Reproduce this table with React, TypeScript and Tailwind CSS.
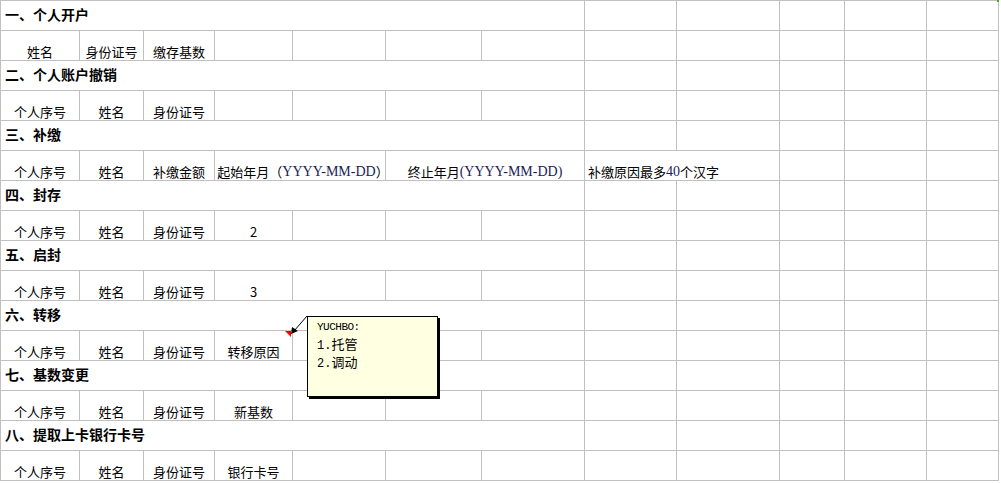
const cols = "grid-cols-[79px_64px_71px_78px_93px_96px_103px_92px_103px_65px_82px_72px]";

const cjk = "font-['SimSun','Noto_Sans_CJK_SC',sans-serif]";
const latin = "font-['Liberation_Serif','Noto_Sans_CJK_SC',serif] text-[#1c1c55]";

type Section = { title: string; fields: string[] };

const sections: Section[] = [
  { title: "一、个人开户", fields: ["姓名", "身份证号", "缴存基数"] },
  { title: "二、个人账户撤销", fields: ["个人序号", "姓名", "身份证号"] },
  { title: "三、补缴", fields: [] },
  { title: "四、封存", fields: ["个人序号", "姓名", "身份证号", "2"] },
  { title: "五、启封", fields: ["个人序号", "姓名", "身份证号", "3"] },
  { title: "六、转移", fields: ["个人序号", "姓名", "身份证号", "转移原因"] },
  { title: "七、基数变更", fields: ["个人序号", "姓名", "身份证号", "新基数"] },
  { title: "八、提取上卡银行卡号", fields: ["个人序号", "姓名", "身份证号", "银行卡号"] },
];

function Cell({
  children,
  span = "",
  className = "",
}: {
  children?: React.ReactNode;
  span?: string;
  className?: string;
}) {
  return (
    <div
      className={`relative h-[30px] border-r border-b border-[#c0c0c0] flex items-end justify-center pb-[1px] text-[13px] leading-[15px] whitespace-nowrap ${span} ${className}`}
    >
      {children}
    </div>
  );
}

function HeaderRow({ title }: { title: string }) {
  return (
    <>
      <div className="col-span-7 h-[30px] border-r border-b border-[#c0c0c0] flex items-center pl-[4px] pb-[3px] text-[14px] font-bold leading-[16px] whitespace-nowrap">
        {title}
      </div>
      {Array.from({ length: 5 }).map((_, i) => (
        <Cell key={i} />
      ))}
    </>
  );
}

function FieldRow({ fields, marker }: { fields: string[]; marker?: number }) {
  return (
    <>
      {Array.from({ length: 12 }).map((_, i) => (
        <Cell key={i}>
          {fields[i]}
          {marker === i && (
            <span className="absolute right-[1px] top-0 w-0 h-0 border-l-[6px] border-l-transparent border-t-[6px] border-t-[#ff0000]" />
          )}
        </Cell>
      ))}
    </>
  );
}

function BuJiaoRow() {
  return (
    <>
      <Cell>个人序号</Cell>
      <Cell>姓名</Cell>
      <Cell>补缴金额</Cell>
      <Cell span="col-span-2" className="pl-[6px]">
        起始年月（<span className={`${latin} text-[14px]`}>YYYY-MM-DD</span>）
      </Cell>
      <Cell span="col-span-2">
        终止年月<span className={`${latin} text-[14px]`}>(YYYY-MM-DD)</span>
      </Cell>
      <Cell span="col-span-2" className="justify-start pl-[3px]">
        补缴原因最多<span className={`${latin} text-[14px]`}>40</span>个汉字
      </Cell>
      <Cell />
      <Cell />
      <Cell />
    </>
  );
}

export default function App() {
  return (
    <div className={`relative w-[1001px] h-[483px] overflow-hidden bg-white text-black ${cjk}`}>
      <div className={`grid ${cols} w-max border-l border-t border-[#c0c0c0]`}>
        {sections.map((s, idx) => (
          <div key={s.title} className="contents">
            <HeaderRow title={s.title} />
            {idx === 2 ? (
              <BuJiaoRow />
            ) : (
              <FieldRow fields={s.fields} marker={idx === 5 ? 3 : undefined} />
            )}
          </div>
        ))}
      </div>

      {/* comment note */}
      <svg className="absolute left-0 top-0 pointer-events-none" width="1001" height="483">
        <line x1="307" y1="316" x2="294" y2="331" stroke="#000" strokeWidth="1" />
        <polygon points="291,334 292,327 298,331" fill="#000" />
      </svg>
      <div className="absolute left-[307px] top-[316px] w-[131px] h-[81px] border border-black bg-[#ffffe1] shadow-[2px_2px_0_#000] px-[9px] pt-[4px]">
        <div className="font-['Liberation_Mono',monospace] text-[11px] leading-[12px] tracking-[-0.5px]">YUCHBO:</div>
        <div className="text-[13px] leading-[15px] mt-[3px]">
          <span className="font-['Liberation_Mono',monospace] text-[12px]">1.</span>托管
        </div>
        <div className="text-[13px] leading-[15px]">
          <span className="font-['Liberation_Mono',monospace] text-[12px]">2.</span>调动
        </div>
      </div>
      <div className="absolute left-[997px] top-0 w-[2px] h-[2px] bg-[#3fae2a]" />
    </div>
  );
}
